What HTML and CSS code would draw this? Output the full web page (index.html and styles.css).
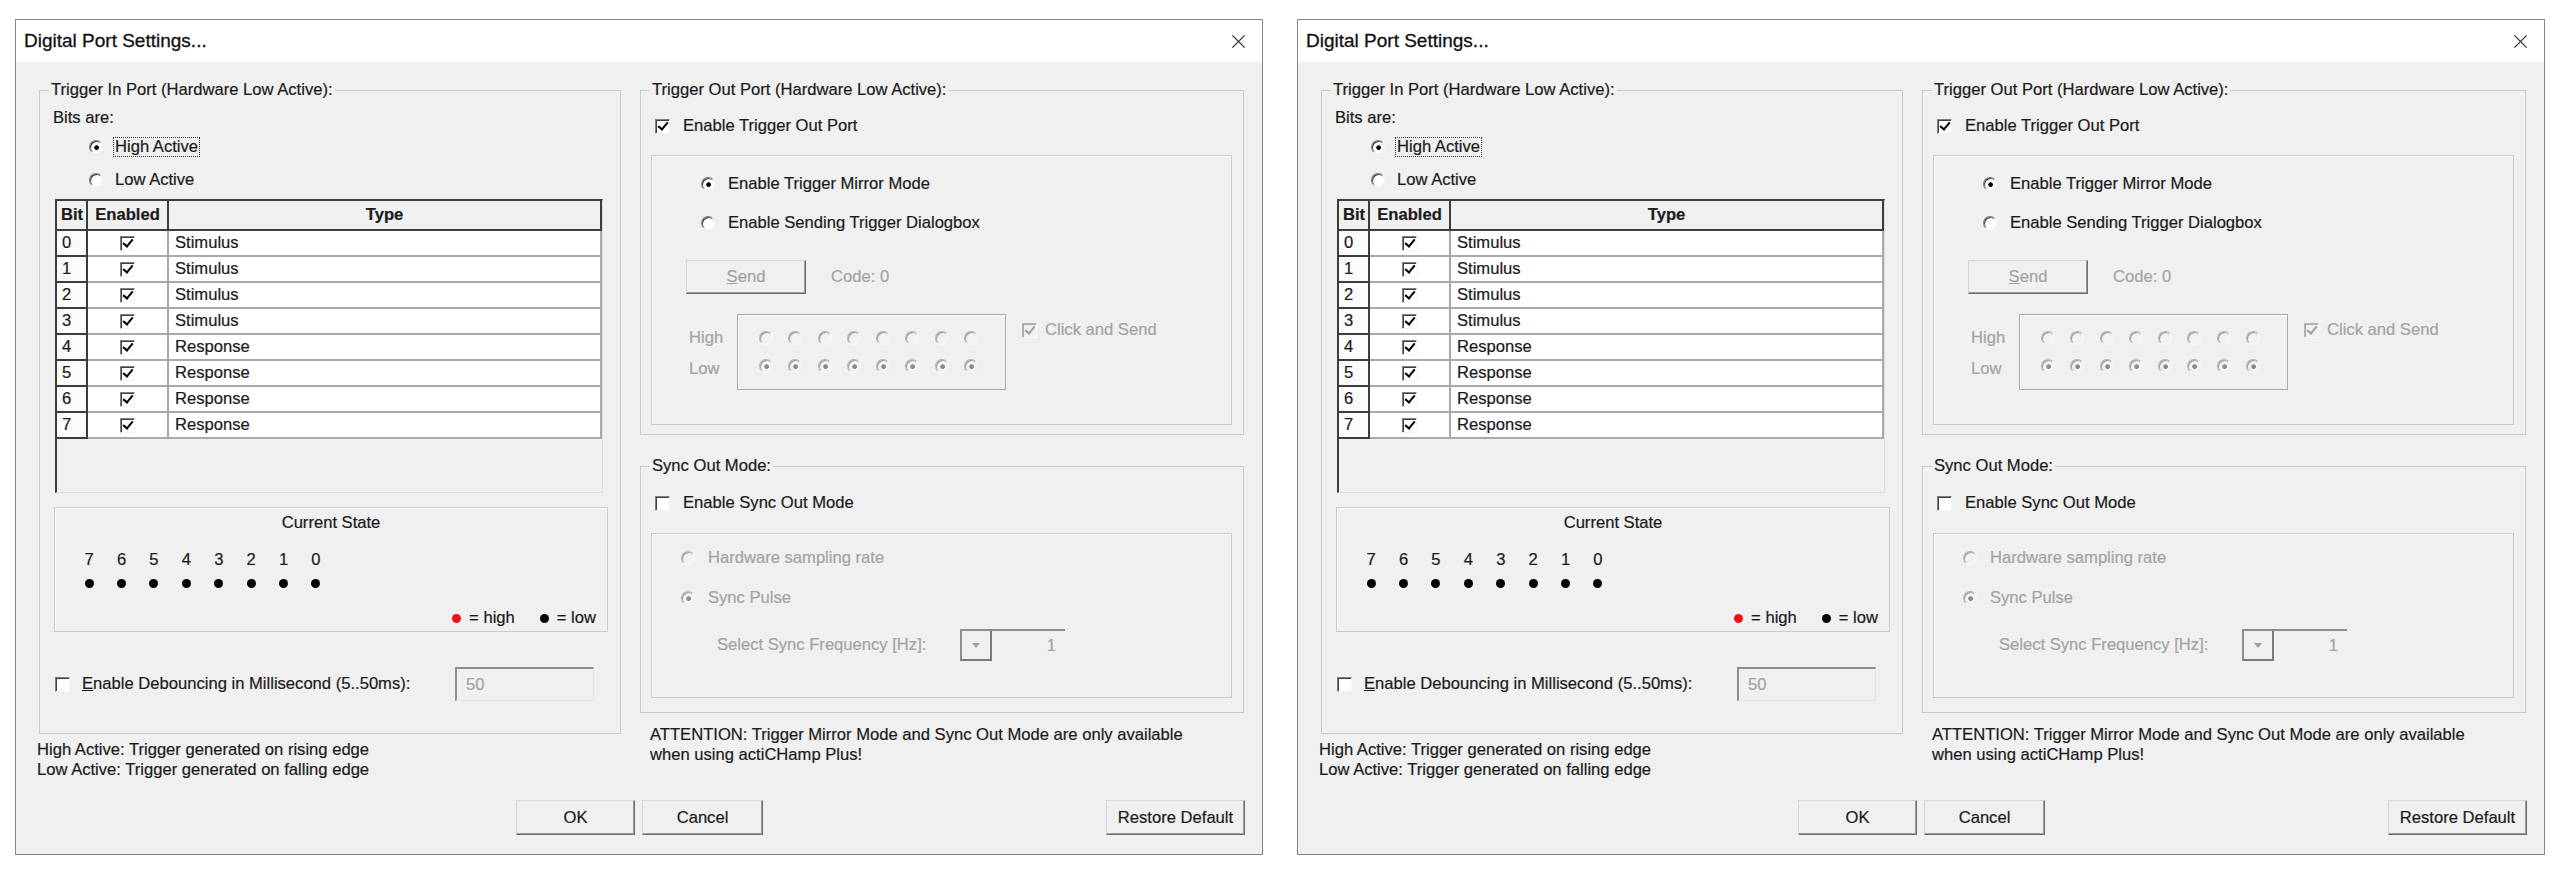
FILE: index.html
```html
<!DOCTYPE html>
<html>
<head>
  <meta charset="utf-8">
  <title>Digital Port Settings...</title>
  <link rel="stylesheet" href="styles.css">
</head>
<body>
<div class="screen">

  <div class="dialog">
    <div class="titlebar">
      <span class="title">Digital Port Settings...</span>
      <svg class="close" viewBox="0 0 16 16"><path d="M1.5 1.5L14.5 14.5M14.5 1.5L1.5 14.5"/></svg>
    </div>
    <div class="dlg-body">
      <div class="columns">
        <div class="col-left">
          <fieldset class="group">
            <legend>Trigger In Port (Hardware Low Active):</legend>
            <div class="in-body">
              <div class="line">Bits are:</div>
              <div class="opt-row opt-high"><span class="radio on"></span><span class="focus">High Active</span></div>
              <div class="opt-row opt-low"><span class="radio"></span><span>Low Active</span></div>

              <div class="bit-list">
                <div class="bit-grid">
                  <div class="th th-bit">Bit</div><div class="th">Enabled</div><div class="th">Type</div>
                  <div class="td-bit">0</div><div class="td td-check"><span class="check on"></span></div><div class="td">Stimulus</div>
                  <div class="td-bit">1</div><div class="td td-check"><span class="check on"></span></div><div class="td">Stimulus</div>
                  <div class="td-bit">2</div><div class="td td-check"><span class="check on"></span></div><div class="td">Stimulus</div>
                  <div class="td-bit">3</div><div class="td td-check"><span class="check on"></span></div><div class="td">Stimulus</div>
                  <div class="td-bit">4</div><div class="td td-check"><span class="check on"></span></div><div class="td">Response</div>
                  <div class="td-bit">5</div><div class="td td-check"><span class="check on"></span></div><div class="td">Response</div>
                  <div class="td-bit">6</div><div class="td td-check"><span class="check on"></span></div><div class="td">Response</div>
                  <div class="td-bit">7</div><div class="td td-check"><span class="check on"></span></div><div class="td">Response</div>
                </div>
              </div>

              <div class="state-box">
                <div class="state-title">Current State</div>
                <div class="state-nums"><span>7</span><span>6</span><span>5</span><span>4</span><span>3</span><span>2</span><span>1</span><span>0</span></div>
                <div class="state-dots"><span><i class="dot"></i></span><span><i class="dot"></i></span><span><i class="dot"></i></span><span><i class="dot"></i></span><span><i class="dot"></i></span><span><i class="dot"></i></span><span><i class="dot"></i></span><span><i class="dot"></i></span></div>
                <div class="state-legend"><i class="dot red"></i><span>= high</span><i class="dot second"></i><span>= low</span></div>
              </div>

              <div class="debounce-row">
                <span class="check"></span>
                <span class="debounce-label"><u>E</u>nable Debouncing in Millisecond (5..50ms):</span>
                <span class="field">50</span>
              </div>
            </div>
          </fieldset>
          <div class="note note-left">High Active: Trigger generated on rising edge<br>Low Active: Trigger generated on falling edge</div>
        </div>

        <div class="col-right">
          <fieldset class="group">
            <legend>Trigger Out Port (Hardware Low Active):</legend>
            <div class="out-body">
              <div class="check-row"><span class="check on"></span><span>Enable Trigger Out Port</span></div>
              <div class="sub-box mirror-box">
                <div class="opt-row mirror-a"><span class="radio on"></span><span>Enable Trigger Mirror Mode</span></div>
                <div class="opt-row mirror-b"><span class="radio"></span><span>Enable Sending Trigger Dialogbox</span></div>
                <div class="send-row">
                  <span class="btn btn-send muted"><u>S</u>end</span>
                  <span class="muted code">Code: 0</span>
                </div>
                <div class="pins-row">
                  <div class="pin-labels muted"><span>High</span><span>Low</span></div>
                  <div class="pin-box">
                    <span class="radio dis"></span><span class="radio dis"></span><span class="radio dis"></span><span class="radio dis"></span><span class="radio dis"></span><span class="radio dis"></span><span class="radio dis"></span><span class="radio dis"></span>
                    <span class="radio dis on"></span><span class="radio dis on"></span><span class="radio dis on"></span><span class="radio dis on"></span><span class="radio dis on"></span><span class="radio dis on"></span><span class="radio dis on"></span><span class="radio dis on"></span>
                  </div>
                  <div class="click-send muted"><span class="check on dis"></span><span>Click and Send</span></div>
                </div>
              </div>
            </div>
          </fieldset>

          <fieldset class="group group-sync">
            <legend>Sync Out Mode:</legend>
            <div class="sync-body">
              <div class="check-row"><span class="check"></span><span>Enable Sync Out Mode</span></div>
              <div class="sub-box sync-box">
                <div class="opt-row sync-a muted"><span class="radio dis"></span><span>Hardware sampling rate</span></div>
                <div class="opt-row sync-b muted"><span class="radio dis on"></span><span>Sync Pulse</span></div>
                <div class="freq-row muted">
                  <span class="freq-label">Select Sync Frequency [Hz]:</span>
                  <div class="spin"><span class="spin-btn"><i class="arrow"></i></span><span class="spin-val">1</span></div>
                </div>
              </div>
            </div>
          </fieldset>
          <div class="note note-right">ATTENTION: Trigger Mirror Mode and Sync Out Mode are only available<br>when using actiCHamp Plus!</div>
        </div>
      </div>

      <div class="buttons">
        <span class="btn btn-ok">OK</span>
        <span class="btn btn-cancel">Cancel</span>
        <span class="btn btn-restore">Restore Default</span>
      </div>
    </div>
  </div>

  <div class="dialog">
    <div class="titlebar">
      <span class="title">Digital Port Settings...</span>
      <svg class="close" viewBox="0 0 16 16"><path d="M1.5 1.5L14.5 14.5M14.5 1.5L1.5 14.5"/></svg>
    </div>
    <div class="dlg-body">
      <div class="columns">
        <div class="col-left">
          <fieldset class="group">
            <legend>Trigger In Port (Hardware Low Active):</legend>
            <div class="in-body">
              <div class="line">Bits are:</div>
              <div class="opt-row opt-high"><span class="radio on"></span><span class="focus">High Active</span></div>
              <div class="opt-row opt-low"><span class="radio"></span><span>Low Active</span></div>

              <div class="bit-list">
                <div class="bit-grid">
                  <div class="th th-bit">Bit</div><div class="th">Enabled</div><div class="th">Type</div>
                  <div class="td-bit">0</div><div class="td td-check"><span class="check on"></span></div><div class="td">Stimulus</div>
                  <div class="td-bit">1</div><div class="td td-check"><span class="check on"></span></div><div class="td">Stimulus</div>
                  <div class="td-bit">2</div><div class="td td-check"><span class="check on"></span></div><div class="td">Stimulus</div>
                  <div class="td-bit">3</div><div class="td td-check"><span class="check on"></span></div><div class="td">Stimulus</div>
                  <div class="td-bit">4</div><div class="td td-check"><span class="check on"></span></div><div class="td">Response</div>
                  <div class="td-bit">5</div><div class="td td-check"><span class="check on"></span></div><div class="td">Response</div>
                  <div class="td-bit">6</div><div class="td td-check"><span class="check on"></span></div><div class="td">Response</div>
                  <div class="td-bit">7</div><div class="td td-check"><span class="check on"></span></div><div class="td">Response</div>
                </div>
              </div>

              <div class="state-box">
                <div class="state-title">Current State</div>
                <div class="state-nums"><span>7</span><span>6</span><span>5</span><span>4</span><span>3</span><span>2</span><span>1</span><span>0</span></div>
                <div class="state-dots"><span><i class="dot"></i></span><span><i class="dot"></i></span><span><i class="dot"></i></span><span><i class="dot"></i></span><span><i class="dot"></i></span><span><i class="dot"></i></span><span><i class="dot"></i></span><span><i class="dot"></i></span></div>
                <div class="state-legend"><i class="dot red"></i><span>= high</span><i class="dot second"></i><span>= low</span></div>
              </div>

              <div class="debounce-row">
                <span class="check"></span>
                <span class="debounce-label"><u>E</u>nable Debouncing in Millisecond (5..50ms):</span>
                <span class="field">50</span>
              </div>
            </div>
          </fieldset>
          <div class="note note-left">High Active: Trigger generated on rising edge<br>Low Active: Trigger generated on falling edge</div>
        </div>

        <div class="col-right">
          <fieldset class="group">
            <legend>Trigger Out Port (Hardware Low Active):</legend>
            <div class="out-body">
              <div class="check-row"><span class="check on"></span><span>Enable Trigger Out Port</span></div>
              <div class="sub-box mirror-box">
                <div class="opt-row mirror-a"><span class="radio on"></span><span>Enable Trigger Mirror Mode</span></div>
                <div class="opt-row mirror-b"><span class="radio"></span><span>Enable Sending Trigger Dialogbox</span></div>
                <div class="send-row">
                  <span class="btn btn-send muted"><u>S</u>end</span>
                  <span class="muted code">Code: 0</span>
                </div>
                <div class="pins-row">
                  <div class="pin-labels muted"><span>High</span><span>Low</span></div>
                  <div class="pin-box">
                    <span class="radio dis"></span><span class="radio dis"></span><span class="radio dis"></span><span class="radio dis"></span><span class="radio dis"></span><span class="radio dis"></span><span class="radio dis"></span><span class="radio dis"></span>
                    <span class="radio dis on"></span><span class="radio dis on"></span><span class="radio dis on"></span><span class="radio dis on"></span><span class="radio dis on"></span><span class="radio dis on"></span><span class="radio dis on"></span><span class="radio dis on"></span>
                  </div>
                  <div class="click-send muted"><span class="check on dis"></span><span>Click and Send</span></div>
                </div>
              </div>
            </div>
          </fieldset>

          <fieldset class="group group-sync">
            <legend>Sync Out Mode:</legend>
            <div class="sync-body">
              <div class="check-row"><span class="check"></span><span>Enable Sync Out Mode</span></div>
              <div class="sub-box sync-box">
                <div class="opt-row sync-a muted"><span class="radio dis"></span><span>Hardware sampling rate</span></div>
                <div class="opt-row sync-b muted"><span class="radio dis on"></span><span>Sync Pulse</span></div>
                <div class="freq-row muted">
                  <span class="freq-label">Select Sync Frequency [Hz]:</span>
                  <div class="spin"><span class="spin-btn"><i class="arrow"></i></span><span class="spin-val">1</span></div>
                </div>
              </div>
            </div>
          </fieldset>
          <div class="note note-right">ATTENTION: Trigger Mirror Mode and Sync Out Mode are only available<br>when using actiCHamp Plus!</div>
        </div>
      </div>

      <div class="buttons">
        <span class="btn btn-ok">OK</span>
        <span class="btn btn-cancel">Cancel</span>
        <span class="btn btn-restore">Restore Default</span>
      </div>
    </div>
  </div>

</div>
</body>
</html>
```

FILE: styles.css
```css
body {
    margin: 0;
    background: #ffffff;
    font-family: "Liberation Sans", Arial, sans-serif;
    font-size: 16.6px;
    color: #1a1a1a;
    -webkit-text-stroke: 0.2px;
  }
.screen {
    display: flex;
    gap: 34px;
    padding: 19px 0 0 15px;
  }

/* window frame */
.dialog {
    width: 1248px;
    height: 836px;
    box-sizing: border-box;
    border: 1px solid #858585;
    background: #f0f0f0;
    display: flex;
    flex-direction: column;
  }
.titlebar {
    flex: none;
    height: 42px;
    background: #ffffff;
    display: flex;
    align-items: center;
    justify-content: space-between;
    padding: 0 16px 0 8px;
  }
.title { font-size: 19px; color: #111; -webkit-text-stroke: 0.3px; }
.close { width: 15px; height: 15px; }
.close path { stroke: #333; stroke-width: 1.4; fill: none; }

.dlg-body {
    flex: 1;
    display: flex;
    flex-direction: column;
    padding: 18px 17px 0 23px;
  }
.columns { display: flex; gap: 19px; }
.col-left { width: 582px; }
.col-right { width: 604px; }

/* group boxes */
.group {
    margin: 0;
    padding: 0;
    min-width: 0;
    border: 1px solid #cbcbcb;
  }
.group > legend {
    margin-left: 9px;
    padding: 0 2px;
    height: 20px;
    line-height: 20px;
  }
.sub-box {
    box-sizing: border-box;
    border: 1px solid #cbcbcb;
    box-shadow: inset 1px 1px 0 #fbfbfb;
  }
.line { height: 20px; line-height: 20px; }
.muted { color: #a3a3a3; }

/* radio buttons and check boxes */
.opt-row {
    height: 20px;
    display: flex;
    align-items: center;
  }
.radio {
    flex: none;
    width: 14px;
    height: 14px;
    box-sizing: border-box;
    border-radius: 50%;
    border: 1px solid;
    border-color: #7c7c7c #f6f6f6 #f6f6f6 #7c7c7c;
    box-shadow: inset 1px 1px 0 #3a3a3a;
    background: #ffffff;
  }
.radio.on { background: radial-gradient(circle at 55% 55%, #000 0 2px, #fff 2.6px); }
.radio.dis {
    border-color: #b4b4b4 #f8f8f8 #f8f8f8 #b4b4b4;
    box-shadow: inset 1px 1px 0 #9a9a9a;
    background: #f2f2f2;
  }
.radio.dis.on { background: radial-gradient(circle at 55% 55%, #8a8a8a 0 2px, #f2f2f2 2.6px); }

.check {
    flex: none;
    width: 15px;
    height: 15px;
    box-sizing: border-box;
    border: 1px solid;
    border-color: #808080 #f4f4f4 #f4f4f4 #808080;
    box-shadow: inset 1px 1px 0 #404040;
    background: #ffffff;
    display: inline-flex;
    align-items: center;
    justify-content: center;
  }
.check.on::after {
    content: '';
    width: 4px;
    height: 8px;
    margin: -3px 0 0 1px;
    border: solid #000;
    border-width: 0 2px 2px 0;
    transform: rotate(40deg);
  }
.check.dis {
    background: #f0f0f0;
    border-color: #b4b4b4 #fafafa #fafafa #b4b4b4;
    box-shadow: inset 1px 1px 0 #a8a8a8;
  }
.check.dis::after { border-color: #a0a0a0; }

/* trigger in */
.in-body { padding: 8px 0 32px 13px; }
.opt-high { margin-top: 9px; padding-left: 36px; gap: 10px; }
.opt-low { margin-top: 13px; padding-left: 36px; gap: 12px; }
.focus { border: 1px dotted #333; padding: 0 1px; line-height: 18px; }

.bit-list {
    margin: 9px 0 0 2px;
    width: 548px;
    height: 294px;
    box-sizing: border-box;
    border-top: 2px solid #3c3c3c;
    border-left: 2px solid #3c3c3c;
    border-right: 1px solid #dedede;
    border-bottom: 1px solid #dedede;
  }
.bit-grid {
    display: grid;
    grid-template-columns: 31px 81px 1fr;
    grid-template-rows: 30px repeat(8, 26px);
  }
.th, .td, .td-bit {
    box-sizing: border-box;
    display: flex;
    align-items: center;
    overflow: hidden;
    white-space: nowrap;
  }
.th {
    justify-content: center;
    font-weight: bold;
    background: #f0f0f0;
    border-right: 2px solid #3c3c3c;
    border-bottom: 2px solid #3c3c3c;
  }
.th-bit { justify-content: flex-start; padding-left: 4px; }
.td-bit {
    padding-left: 5px;
    background: #fafafa;
    border-right: 2px solid #3c3c3c;
    border-bottom: 2px solid #3c3c3c;
  }
.td {
    padding-left: 6px;
    background: #ffffff;
    border-right: 2px solid #a9a9a9;
    border-bottom: 2px solid #a9a9a9;
  }
.td-check { justify-content: center; padding-left: 0; }

.state-box {
    margin: 14px 0 0 1px;
    width: 554px;
    height: 125px;
    box-sizing: border-box;
    border: 1px solid #cbcbcb;
    box-shadow: inset 1px 1px 0 #fbfbfb;
  }
.state-title { margin-top: 5px; line-height: 20px; text-align: center; }
.state-nums, .state-dots { display: flex; padding-left: 18px; }
.state-nums { margin-top: 17px; line-height: 20px; }
.state-dots { margin-top: 7px; height: 12px; }
.state-nums span, .state-dots span {
    width: 32.4px;
    display: flex;
    justify-content: center;
    align-items: center;
  }
.dot {
    display: block;
    width: 9px;
    height: 9px;
    border-radius: 50%;
    background: #000;
  }
.dot.red { background: #ee1111; }
.state-legend {
    margin-top: 19px;
    height: 20px;
    display: flex;
    align-items: center;
    justify-content: flex-end;
    gap: 8px;
    padding-right: 11px;
  }
.state-legend .second { margin-left: 17px; }

.debounce-row {
    margin-top: 35px;
    height: 34px;
    display: flex;
    align-items: center;
  }
.debounce-row .check { margin-left: 2px; }
.debounce-label { margin-left: 12px; }
.field {
    margin: 0 26px 0 auto;
    width: 139px;
    height: 34px;
    box-sizing: border-box;
    padding-left: 9px;
    line-height: 31px;
    color: #a3a3a3;
    background: #f0f0f0;
    border-top: 2px solid #8e8e8e;
    border-left: 2px solid #8e8e8e;
    border-right: 1px solid #e4e4e4;
    border-bottom: 1px solid #e4e4e4;
  }

.note { line-height: 20px; }
.note-left { margin: 6px 0 0 -2px; }
.note-right { margin: 12px 0 0 10px; }

/* trigger out */
.out-body { padding: 16px 11px 9px 10px; }
.check-row {
    height: 20px;
    display: flex;
    align-items: center;
    gap: 13px;
    padding-left: 4px;
  }
.mirror-box { margin-top: 19px; height: 270px; }
.mirror-a { margin-top: 18px; padding-left: 49px; gap: 13px; }
.mirror-b { margin-top: 19px; padding-left: 49px; gap: 13px; }
.send-row {
    margin-top: 27px;
    padding-left: 34px;
    height: 34px;
    display: flex;
    align-items: center;
  }
.code { margin-left: 25px; }
.pins-row { margin-top: 20px; padding-left: 37px; display: flex; }
.pin-labels {
    width: 48px;
    display: flex;
    flex-direction: column;
    gap: 11px;
    padding-top: 14px;
    line-height: 20px;
  }
.pin-box {
    width: 269px;
    height: 76px;
    box-sizing: border-box;
    border: 1px solid #a9a9a9;
    box-shadow: inset 1px 1px 0 #fbfbfb;
    padding: 16px 0 0 21px;
    display: grid;
    grid-template-columns: repeat(8, 29.3px);
    grid-auto-rows: 14px;
    row-gap: 14px;
  }
.click-send {
    margin: 6px 0 0 16px;
    height: 20px;
    display: flex;
    align-items: center;
    gap: 8px;
  }

/* sync out */
.group-sync { margin-top: 21px; }
.sync-body { padding: 17px 11px 14px 10px; }
.sync-box { margin-top: 20px; height: 165px; }
.sync-a { margin-top: 14px; padding-left: 29px; gap: 13px; }
.sync-b { margin-top: 20px; padding-left: 29px; gap: 13px; }
.freq-row {
    margin-top: 21px;
    padding-left: 65px;
    height: 32px;
    display: flex;
    align-items: center;
  }
.freq-label { width: 243px; }
.spin {
    width: 105px;
    height: 32px;
    box-sizing: border-box;
    display: flex;
    background: #f0f0f0;
    border-top: 2px solid #8e8e8e;
  }
.spin-btn {
    width: 32px;
    box-sizing: border-box;
    border-left: 2px solid #8e8e8e;
    border-right: 2px solid #7a7a7a;
    border-bottom: 2px solid #7a7a7a;
    display: flex;
    align-items: center;
    justify-content: center;
  }
.arrow {
    width: 0;
    height: 0;
    border-left: 4px solid transparent;
    border-right: 4px solid transparent;
    border-top: 5px solid #a0a0a0;
  }
.spin-val { flex: 1; text-align: right; padding-right: 9px; line-height: 30px; }

/* push buttons */
.btn {
    box-sizing: border-box;
    height: 35px;
    display: inline-flex;
    align-items: center;
    justify-content: center;
    background: #f0f0f0;
    border: 1px solid;
    border-color: #d6d6d6 #6c6c6c #6c6c6c #d6d6d6;
    box-shadow: inset -1px -1px 0 #9c9c9c;
  }
.btn-send { width: 120px; height: 34px; color: #a3a3a3; }
.buttons { margin-top: 20px; display: flex; }
.btn-ok { width: 119px; margin-left: 477px; }
.btn-cancel { width: 121px; margin-left: 7px; }
.btn-restore { width: 139px; margin-left: auto; }
```
